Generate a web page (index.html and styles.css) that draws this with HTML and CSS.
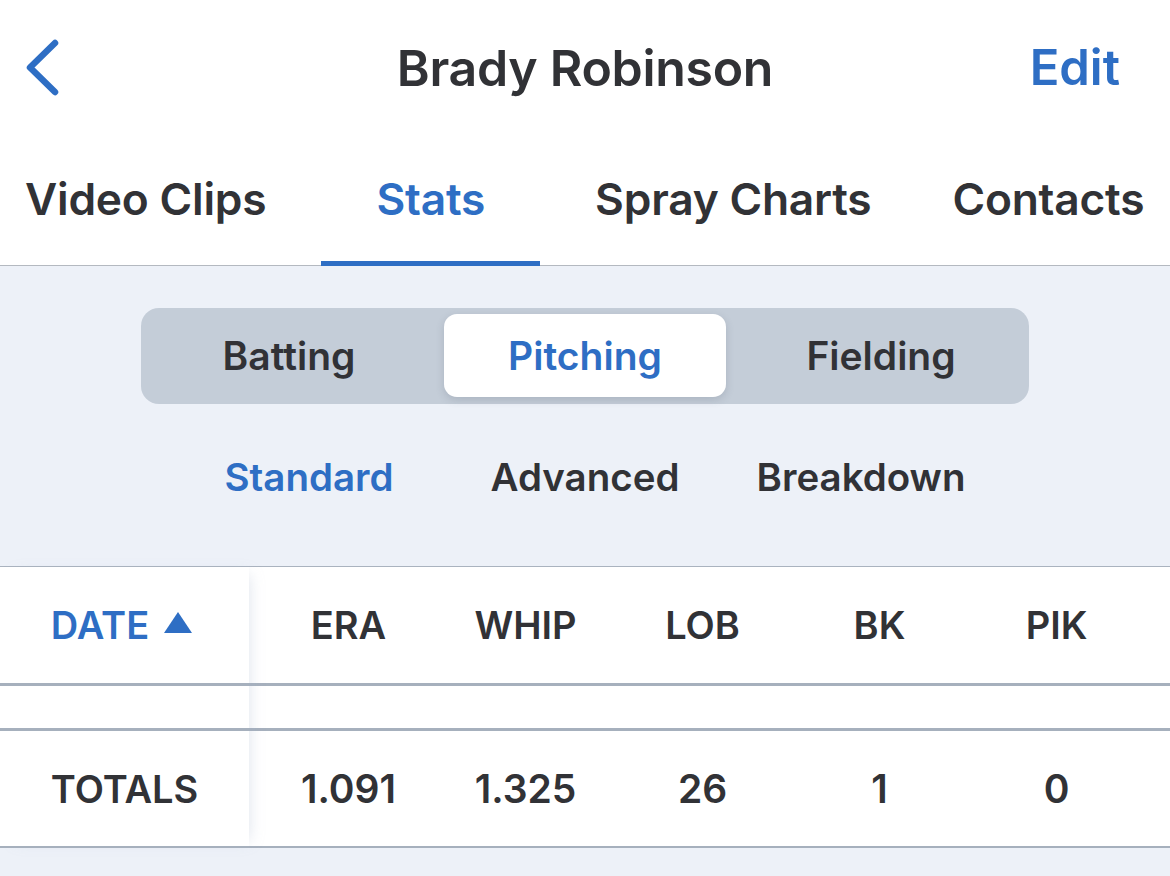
FILE: index.html
```html
<!DOCTYPE html>
<html>
<head>
<meta charset="utf-8">
<link rel="stylesheet" href="styles.css">
</head>
<body>
<div class="app">
  <header class="topbar">
    <div class="nav">
      <button class="back" aria-label="Back">
        <svg width="40" height="60" viewBox="0 0 40 60"><path d="M31 6 L6 30.5 L31 55" fill="none" stroke="#2e6ec4" stroke-width="6.5" stroke-linecap="round" stroke-linejoin="round"/></svg>
      </button>
      <h1 class="title">Brady Robinson</h1>
      <a class="edit">Edit</a>
    </div>
    <nav class="tabs">
      <div class="tab">Video Clips</div>
      <div class="tab active">Stats</div>
      <div class="tab">Spray Charts</div>
      <div class="tab last">Contacts</div>
    </nav>
  </header>

  <section class="controls">
    <div class="segmented">
      <div class="seg">Batting</div>
      <div class="seg selected">Pitching</div>
      <div class="seg">Fielding</div>
    </div>
    <div class="subtabs">
      <div class="sub active">Standard</div>
      <div class="sub">Advanced</div>
      <div class="sub">Breakdown</div>
    </div>
  </section>

  <section class="table">
    <div class="fixed">
      <div class="cell head sort">DATE <span class="tri"></span></div>
      <div class="cell empty"></div>
      <div class="cell total">TOTALS</div>
    </div>
    <div class="scroll">
      <div class="row head">
        <div class="col">ERA</div><div class="col">WHIP</div><div class="col">LOB</div><div class="col">BK</div><div class="col">PIK</div>
      </div>
      <div class="row empty"></div>
      <div class="row total">
        <div class="col">1.091</div><div class="col">1.325</div><div class="col">26</div><div class="col">1</div><div class="col">0</div>
      </div>
    </div>
  </section>
</div>
</body>
</html>
```

FILE: styles.css
```css
* { box-sizing: border-box; }
html, body { margin: 0; padding: 0; }
body {
  width: 1170px;
  height: 876px;
  overflow: hidden;
  background: #edf1f8;
  font-family: Inter, "Noto Sans", sans-serif;
  color: #313236;
}
.app { width: 1170px; }

.topbar { background: #fff; border-bottom: 1px solid #b4b9c0; }
.nav {
  height: 136px;
  display: flex;
  align-items: center;
  justify-content: space-between;
  padding: 0 50px 0 24px;
  position: relative;
}
.back {
  border: 0; background: none; padding: 0;
  width: 40px; height: 60px;
  margin-top: -2px;
}
.back svg { display: block; }
.title {
  position: absolute;
  left: 0; right: 0;
  text-align: center;
  margin: 0;
  font-size: 50px;
  font-weight: 600;
  letter-spacing: -0.3px;
  color: #313236;
  top: 38px;
  line-height: 60px;
  pointer-events: none;
}
.edit {
  font-size: 49px;
  font-weight: 600;
  color: #2e6ec4;
  margin-top: -2px;
}

.tabs {
  display: flex;
  height: 129px;
  margin-left: -30px;
  white-space: nowrap;
}
.tab {
  padding: 0 55px;
  font-size: 44.3px;
  font-weight: 600;
  letter-spacing: -0.2px;
  color: #313236;
  display: flex;
  align-items: center;
  border-bottom: 5px solid transparent;
  margin-bottom: -1px;
  flex: none;
}
.tab.active { color: #2e6ec4; border-bottom-color: #2e6ec4; }
.tab.last { padding-left: 26px; }

.controls { padding-top: 42px; height: 300px; }
.segmented {
  margin: 0 auto;
  width: 888px;
  height: 96px;
  background: #c4cdd8;
  border-radius: 18px;
  padding: 6px 0 7px;
  display: grid;
  grid-template-columns: repeat(3, 1fr);
}
.seg {
  display: flex;
  align-items: center;
  justify-content: center;
  font-size: 39px;
  font-weight: 600;
  color: #313236;
}
.seg.selected {
  background: #fff;
  color: #2e6ec4;
  border-radius: 13px;
  margin: 0 7px;
  box-shadow: 0 3px 8px rgba(60, 70, 90, 0.18);
}
.subtabs {
  margin: 40px auto 0;
  width: 828px;
  display: grid;
  grid-template-columns: repeat(3, 1fr);
}
.sub {
  text-align: center;
  font-size: 38.5px;
  font-weight: 600;
  color: #313236;
  line-height: 66px;
}
.sub.active { color: #2e6ec4; }

.table {
  display: flex;
  background: #fff;
  border-top: 1px solid #aab3bf;
}
.fixed {
  width: 249px;
  flex: none;
  position: relative;
  z-index: 2;
  background: #fff;
  box-shadow: 8px 0 14px -8px rgba(160, 175, 200, 0.35);
}
.scroll { flex: 1; }
.cell, .row {
  border-bottom: 3px solid #a6b0bd;
}
.head { height: 119px; }
.empty { height: 45px; }
.total { height: 117px; border-bottom-width: 2px; }
.cell {
  display: flex;
  align-items: center;
  justify-content: center;
  font-size: 38px;
  font-weight: 600;
  color: #313236;
}
.cell.sort { color: #2e6ec4; gap: 15px; padding-right: 6px; }
.tri {
  width: 0; height: 0;
  border-left: 14px solid transparent;
  border-right: 14px solid transparent;
  border-bottom: 21px solid #2e6ec4;
  margin-top: -6px;
}
.row { display: flex; padding-left: 11px; }
.col {
  width: 177px;
  display: flex;
  align-items: center;
  justify-content: center;
  font-size: 38px;
  font-weight: 600;
  color: #313236;
}
.total .col { font-size: 39px; }
```
